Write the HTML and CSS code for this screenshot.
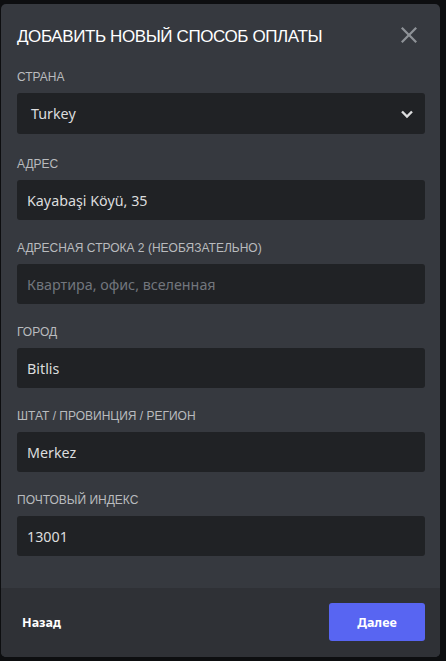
FILE: index.html
```html
<!DOCTYPE html>
<html lang="ru">
<head>
<meta charset="utf-8">
<title>Добавить новый способ оплаты</title>
<link rel="stylesheet" href="styles.css">
</head>
<body>
<div class="modal">
  <div class="header">
    <h2 class="title">Добавить новый способ оплаты</h2>
    <button class="close" aria-label="Закрыть">
      <svg width="24" height="24" viewBox="0 0 24 24"><path fill="currentColor" d="M18.4 4L12 10.4L5.6 4L4 5.6L10.4 12L4 18.4L5.6 20L12 13.6L18.4 20L20 18.4L13.6 12L20 5.6L18.4 4Z"/></svg>
    </button>
  </div>
  <div class="content">
    <div class="field">
      <div class="label">Страна</div>
      <div class="select">
        <span>Turkey</span>
        <svg class="chev" width="14" height="10" viewBox="0 0 14 10"><path d="M2 2.5L7 7.5L12 2.5" fill="none" stroke="currentColor" stroke-width="2.4"/></svg>
      </div>
    </div>
    <div class="field">
      <div class="label">Адрес</div>
      <div class="input">Kayabaşi Köyü, 35</div>
    </div>
    <div class="field">
      <div class="label">Адресная строка 2 (необязательно)</div>
      <div class="input placeholder">Квартира, офис, вселенная</div>
    </div>
    <div class="field">
      <div class="label">Город</div>
      <div class="input">Bitlis</div>
    </div>
    <div class="field">
      <div class="label">Штат / провинция / регион</div>
      <div class="input">Merkez</div>
    </div>
    <div class="field">
      <div class="label">Почтовый индекс</div>
      <div class="input">13001</div>
    </div>
  </div>
  <div class="footer">
    <button class="back">Назад</button>
    <button class="next">Далее</button>
  </div>
</div>
</body>
</html>
```

FILE: styles.css
```css
html, body {
  margin: 0;
  padding: 0;
  background: #0d0e10;
  height: 100%;
}
body {
  padding: 4px 6px 4px 1px;
  box-sizing: border-box;
  font-family: "Liberation Sans", Arial, sans-serif;
}
.modal {
  width: 439px;
  height: 653px;
  background: #36393f;
  border-radius: 5px;
  display: flex;
  flex-direction: column;
  overflow: hidden;
}
.header {
  display: flex;
  align-items: center;
  justify-content: space-between;
  padding: 20px 8px 0 16px;
}
.title {
  margin: 0;
  font-size: 17px;
  line-height: 26px;
  font-weight: 400;
  color: #ffffff;
  text-transform: uppercase;
  letter-spacing: -0.4px;
}
.close {
  background: none;
  border: 0;
  padding: 0;
  width: 24px;
  height: 24px;
  color: #8e9297;
  margin-top: -5px;
  margin-right: 11px;
}
.close svg { display: block; }
.content {
  flex: 1;
  padding: 19px 15px 0 16px;
}
.field { margin-bottom: 20px; }
.field:first-child { margin-bottom: 22px; }
.label {
  font-size: 12px;
  line-height: 16px;
  color: #b9bbbe;
  text-transform: uppercase;
  margin-bottom: 8px;
}
.select, .input {
  background: #202225;
  border-radius: 3px;
  height: 40px;
  box-sizing: border-box;
  display: flex;
  align-items: center;
  font-family: "Noto Sans", "Open Sans", sans-serif;
  font-size: 14.3px;
  color: #dcddde;
}
.select {
  height: 41px;
  padding: 0 12px 0 14px;
  justify-content: space-between;
}
.input { padding: 0 10px; }
.placeholder { color: #72767d; }
.chev { color: #dcddde; display: block; margin-right: -1px; }
.footer {
  background: #2f3136;
  height: 69px;
  padding: 0 15px 0 20px;
  display: flex;
  align-items: center;
  justify-content: space-between;
}
.back, .next {
  font-family: "Noto Sans", "Open Sans", sans-serif;
  font-weight: 700;
  font-size: 12.5px;
  color: #ffffff;
  border: 0;
  cursor: pointer;
}
.back {
  background: none;
  padding: 0;
  margin-left: 1px;
}
.next {
  background: #5865f2;
  width: 96px;
  height: 38px;
  border-radius: 3px;
  margin-top: -1px;
}
```
